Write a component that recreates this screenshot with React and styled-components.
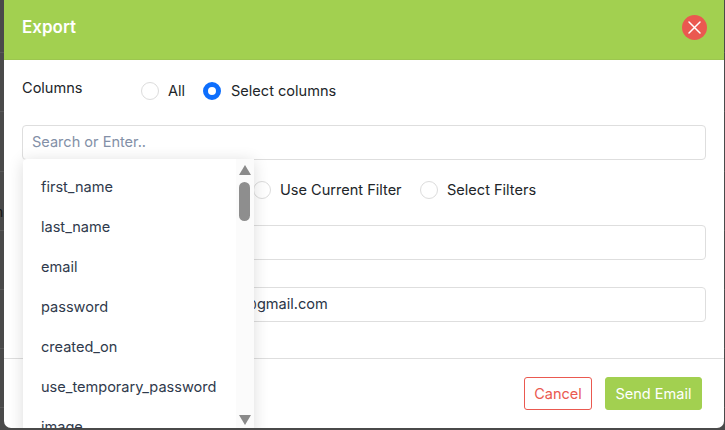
import React from "react";
import styled, { createGlobalStyle } from "styled-components";

const Global = createGlobalStyle`
  html, body { margin: 0; padding: 0; }
  body {
    width: 725px;
    height: 430px;
    overflow: hidden;
    background: repeating-linear-gradient(to bottom, #4a4a4a 0, #4a4a4a 58.2px, #595959 58.2px, #595959 59.2px) 0 -6px;
    font-family: Inter, "Liberation Sans", sans-serif;
  }
  * { box-sizing: border-box; }
`;

const BehindText = styled.span`
  position: absolute;
  left: -5px;
  top: 203px;
  font-size: 14px;
  line-height: 17px;
  color: #161616;
`;

const Modal = styled.div`
  position: relative;
  width: 720px;
  height: 428px;
  margin-left: 4px;
  background: #fff;
  border-radius: 0 0 7px 7px;
  overflow: hidden;
  display: flex;
  flex-direction: column;
`;

const Header = styled.header`
  height: 60px;
  flex: none;
  background: #a2d050;
  border-bottom: 1px solid #9cc64f;
  padding: 15px 18px 0 18px;
  display: flex;
  align-items: flex-start;
  justify-content: space-between;
`;

const Title = styled.h2`
  margin: 0;
  font-size: 17px;
  line-height: 24px;
  font-weight: 600;
  color: #fff;
`;

const Close = styled.button`
  width: 25px;
  height: 25px;
  margin-right: -1px;
  border: 0;
  padding: 0;
  border-radius: 50%;
  background: #ea5950;
  display: flex;
  align-items: center;
  justify-content: center;
`;

const Body = styled.div`
  flex: 1;
  padding: 20px 18px 0;
  position: relative;
`;

const Row = styled.div`
  display: grid;
  grid-template-columns: 119px 1fr;
  align-items: center;
  height: ${(p) => p.$h}px;
  margin-bottom: ${(p) => p.$mb || 0}px;
`;

const Label = styled.label`
  align-self: start;
  font-size: 14.56px;
  line-height: 17px;
  color: #212529;
`;

const Radios = styled.div`
  display: flex;
  align-items: center;
`;

const RadioItem = styled.span`
  display: flex;
  align-items: center;
  gap: ${(p) => p.$gap || 9}px;
  width: ${(p) => p.$w}px;
  font-size: 14.56px;
  line-height: 20px;
  color: #212529;
`;

const Circle = styled.span`
  width: 18px;
  height: 18px;
  flex: none;
  border-radius: 50%;
  background: #fff;
  border: ${(p) => (p.$on ? "5px solid #0d6efd" : "1px solid #dcdcdc")};
`;

const Field = styled.div`
  height: 35px;
  border: 1px solid #dedede;
  border-radius: 4px;
  padding: 0 9px 2px;
  display: flex;
  align-items: center;
  font-size: 14.56px;
  color: ${(p) => (p.$placeholder ? "#8390a7" : "#2a3547")};
`;

const Dropdown = styled.div`
  position: absolute;
  left: 19px;
  top: 99px;
  width: 231px;
  height: 280px;
  background: #fff;
  box-shadow: 0 2px 16px rgba(0, 0, 0, 0.14);
  display: flex;
  border-radius: 4px 4px 0 0;
`;

const List = styled.ul`
  flex: 1;
  list-style: none;
  margin: 0;
  padding: 8px 0 0 18px;
  overflow: hidden;
`;

const Item = styled.li`
  height: 40px;
  line-height: 40px;
  font-size: 14.56px;
  color: #2f3a4c;
  white-space: nowrap;
`;

const Scrollbar = styled.div`
  width: 18px;
  flex: none;
  background: #fbfbfb;
  display: flex;
  flex-direction: column;
  align-items: center;
  padding: 6px 1px 0 0;
`;

const Arrow = styled.span`
  width: 0;
  height: 0;
  border-left: 6px solid transparent;
  border-right: 6px solid transparent;
  ${(p) =>
    p.$down
      ? "border-top: 10px solid #8a8a8a; margin-top: 194px;"
      : "border-bottom: 10px solid #8a8a8a;"}
`;

const Thumb = styled.span`
  width: 11px;
  height: 39px;
  margin-top: 7px;
  border-radius: 6px;
  background: #8e8e8e;
`;

const Footer = styled.footer`
  flex: none;
  height: 70px;
  border-top: 1px solid #dedede;
  padding: 18px 22px 0 0;
  display: flex;
  justify-content: flex-end;
  align-items: flex-start;
  gap: 13px;
`;

const Button = styled.button`
  height: 33px;
  width: ${(p) => p.$w}px;
  padding: 0;
  border-radius: 3px;
  font-family: inherit;
  font-size: 14.56px;
  border: 1px solid ${(p) => (p.$primary ? "#a2d050" : "#ea5950")};
  background: ${(p) => (p.$primary ? "#a2d050" : "#fff")};
  color: ${(p) => (p.$primary ? "#fff" : "#ea5950")};
`;

const columns = [
  "first_name",
  "last_name",
  "email",
  "password",
  "created_on",
  "use_temporary_password",
  "image",
];

export default function App() {
  return (
    <>
      <Global />
      <BehindText>n</BehindText>
      <Modal>
        <Header>
          <Title>Export</Title>
          <Close aria-label="Close">
            <svg width="13" height="13" viewBox="0 0 13 13">
              <path d="M1 1 12 12M12 1 1 12" stroke="#fff" strokeWidth="1.5" strokeLinecap="round" />
            </svg>
          </Close>
        </Header>
        <Body>
          <Row $h={22} $mb={23}>
            <Label>Columns</Label>
            <Radios>
              <RadioItem $w={62}>
                <Circle />
                All
              </RadioItem>
              <RadioItem $w={160} $gap={10}>
                <Circle $on />
                Select columns
              </RadioItem>
            </Radios>
          </Row>
          <Field $placeholder>Search or Enter..</Field>
          <Row $h={60} $mb={5}>
            <span />
            <Radios>
              <RadioItem $w={112}>
                <Circle />
              </RadioItem>
              <RadioItem $w={167}>
                <Circle />
                Use Current Filter
              </RadioItem>
              <RadioItem $w={140}>
                <Circle />
                Select Filters
              </RadioItem>
            </Radios>
          </Row>
          <Row $h={35} $mb={27}>
            <span />
            <Field />
          </Row>
          <Row $h={35}>
            <span />
            <Field>testuser2024@gmail.com</Field>
          </Row>
          <Dropdown>
            <List>
              {columns.map((c) => (
                <Item key={c}>{c}</Item>
              ))}
            </List>
            <Scrollbar>
              <Arrow />
              <Thumb />
              <Arrow $down />
            </Scrollbar>
          </Dropdown>
        </Body>
        <Footer>
          <Button $w={68}>Cancel</Button>
          <Button $w={97} $primary>
            Send Email
          </Button>
        </Footer>
      </Modal>
    </>
  );
}
